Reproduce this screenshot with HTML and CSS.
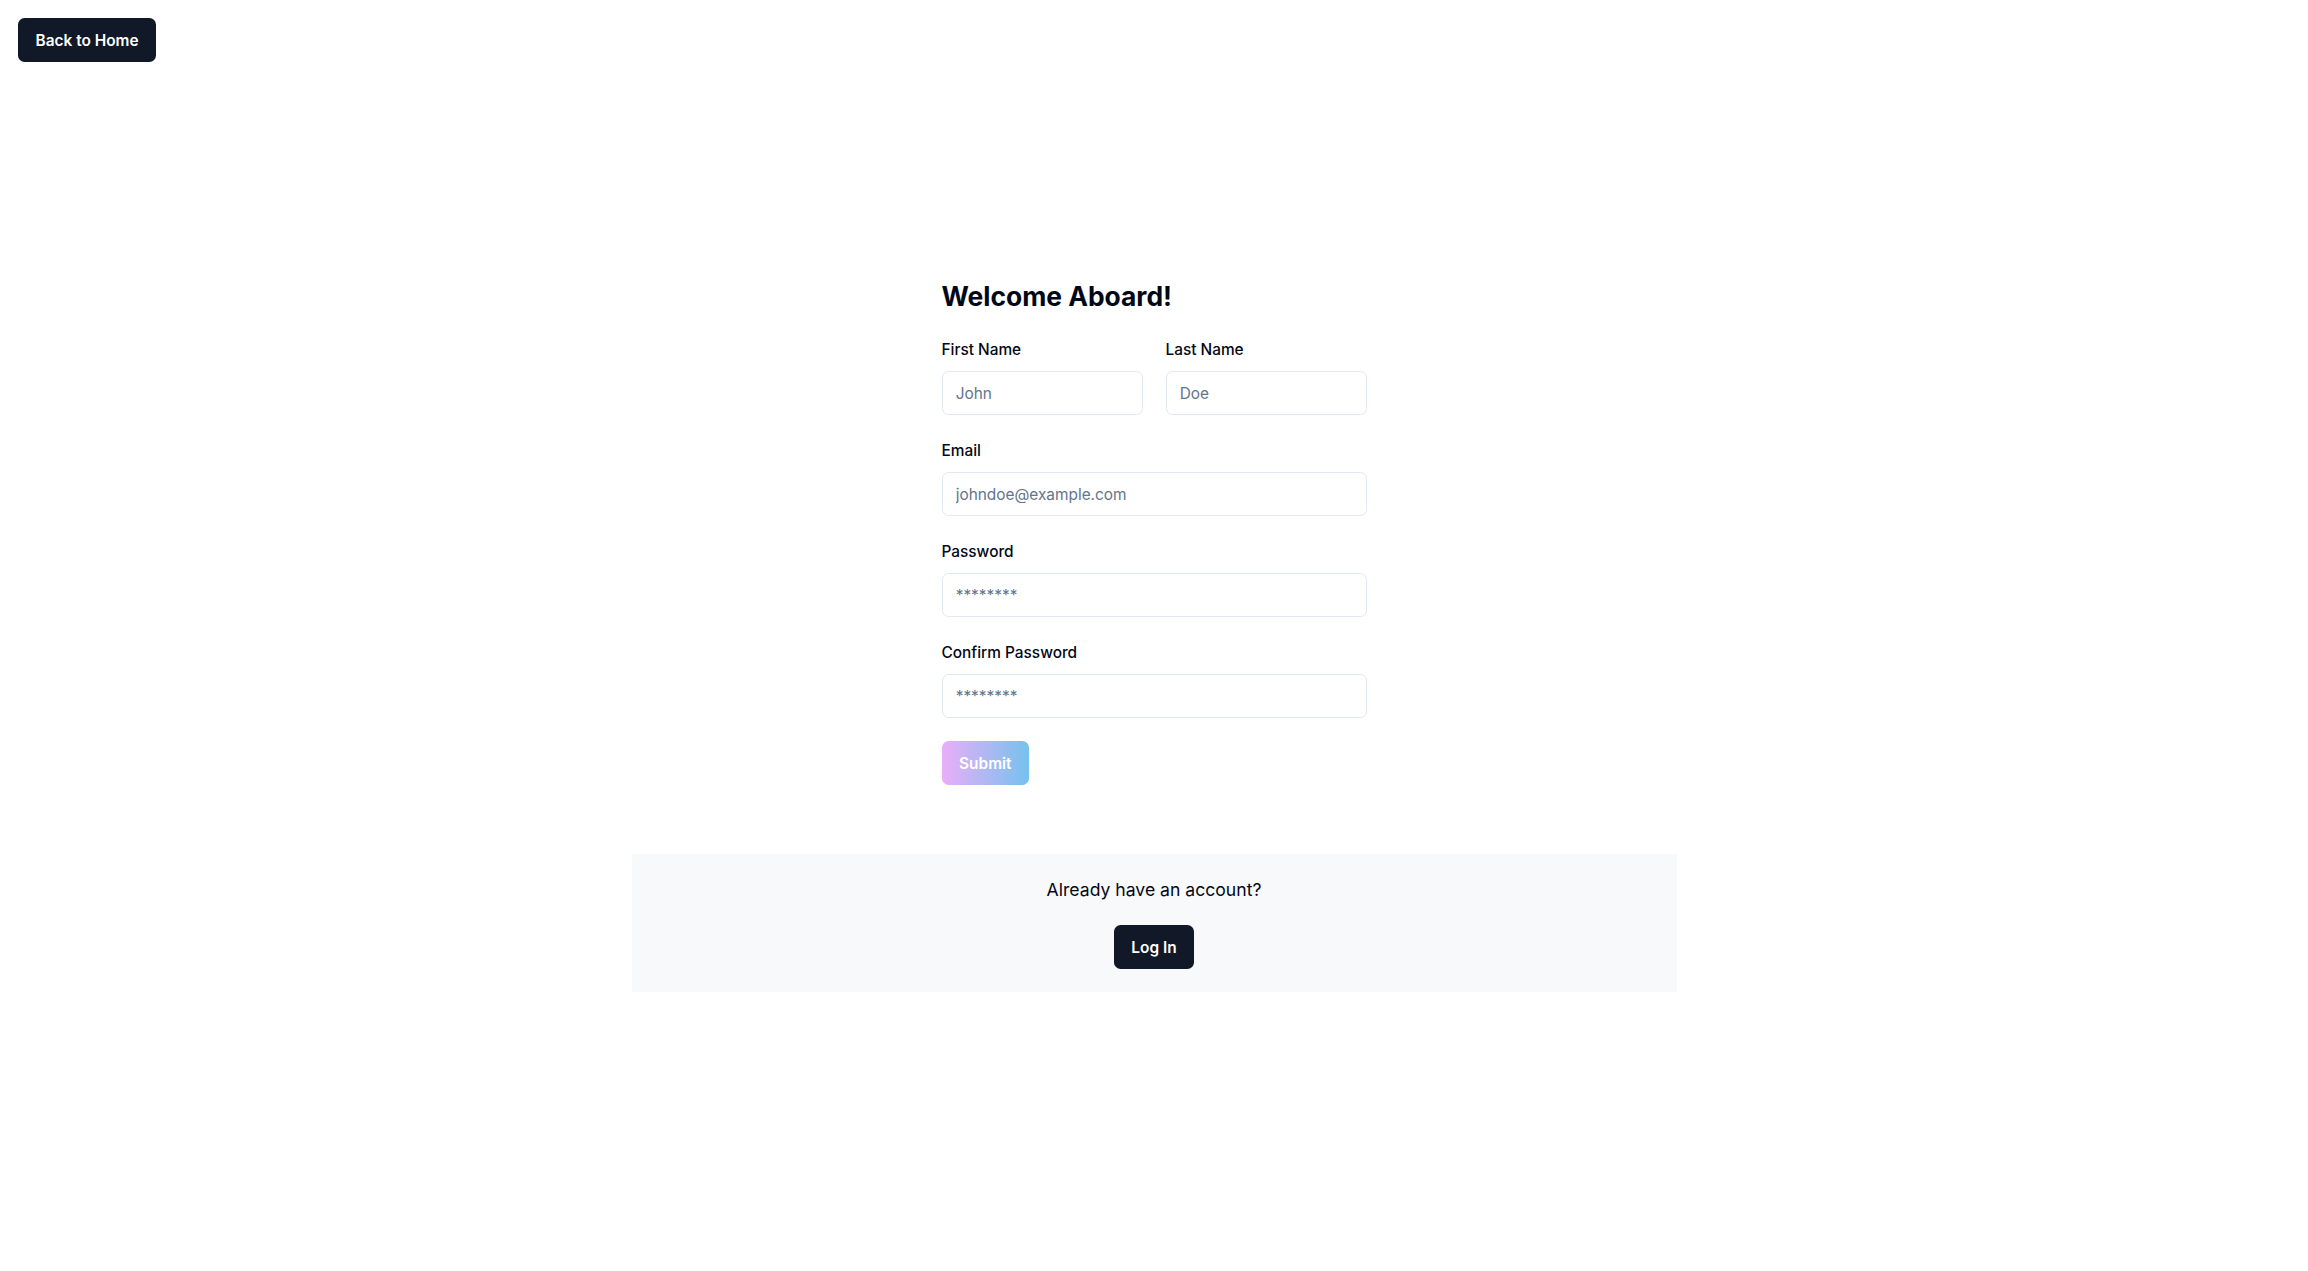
FILE: index.html
```html
<!DOCTYPE html>
<html lang="en">
<head>
<meta charset="utf-8">
<title>Sign Up</title>
<link rel="stylesheet" href="styles.css">
</head>
<body>
<a class="btn btn-dark back-btn" href="#">Back to Home</a>
<main class="page">
  <form class="signup">
    <h1 class="title">Welcome Aboard!</h1>
    <div class="name-row">
      <div class="field">
        <label class="label" for="first">First Name</label>
        <input class="input" id="first" type="text" placeholder="John">
      </div>
      <div class="field">
        <label class="label" for="last">Last Name</label>
        <input class="input" id="last" type="text" placeholder="Doe">
      </div>
    </div>
    <div class="field">
      <label class="label" for="email">Email</label>
      <input class="input" id="email" type="email" placeholder="johndoe@example.com">
    </div>
    <div class="field">
      <label class="label" for="pw">Password</label>
      <input class="input" id="pw" type="password" placeholder="********">
    </div>
    <div class="field">
      <label class="label" for="pw2">Confirm Password</label>
      <input class="input" id="pw2" type="password" placeholder="********">
    </div>
    <div class="actions">
      <button class="btn btn-gradient" type="button">Submit</button>
    </div>
  </form>
  <section class="login-box">
    <p class="login-text">Already have an account?</p>
    <a class="btn btn-dark" href="#">Log In</a>
  </section>
</main>
</body>
</html>
```

FILE: styles.css
```css
* { box-sizing: border-box; }

html, body {
  margin: 0;
  padding: 0;
  background: #ffffff;
  font-family: Inter, "Noto Sans", "Liberation Sans", sans-serif;
  color: #020817;
}

.btn {
  display: inline-flex;
  align-items: center;
  justify-content: center;
  height: 44px;
  padding: 0 17.6px;
  border-radius: 6.6px;
  border: none;
  font-family: inherit;
  font-size: 15.4px;
  font-weight: 600;
  text-decoration: none;
  cursor: pointer;
}

.btn-dark {
  background: #111827;
  color: #ffffff;
}

.back-btn {
  position: absolute;
  top: 18px;
  left: 18px;
}

.page {
  min-height: 100vh;
  display: flex;
  flex-direction: column;
  align-items: center;
  justify-content: center;
}

.signup {
  width: 425px;
  display: flex;
  flex-direction: column;
  gap: 25px;
}

.title {
  margin: 0;
  font-size: 26.4px;
  line-height: 35px;
  font-weight: 700;
  color: #020817;
}

.name-row {
  display: grid;
  grid-template-columns: 1fr 1fr;
  column-gap: 23px;
}

.field {
  display: flex;
  flex-direction: column;
  gap: 10px;
}

.label {
  font-size: 15.4px;
  line-height: 22px;
  font-weight: 500;
  color: #020817;
}

.input {
  height: 44px;
  width: 100%;
  padding: 0 13.2px;
  border: 1px solid #e2e8f0;
  border-radius: 6.6px;
  background: #ffffff;
  font-family: inherit;
  font-size: 15.4px;
  color: #020817;
  outline: none;
}

.input::placeholder {
  color: #64748b;
}

.actions {
  margin-top: -2px;
}

.btn-gradient {
  background: linear-gradient(to right, #e8aff8, #76c1ee);
  color: #ffffff;
}

.login-box {
  width: 1045px;
  margin-top: 69px;
  padding: 23px 0;
  background: #f8f9fb;
  display: flex;
  flex-direction: column;
  align-items: center;
  gap: 22px;
}

.login-text {
  margin: 0;
  font-size: 17.6px;
  line-height: 26px;
  color: #020817;
}
```
